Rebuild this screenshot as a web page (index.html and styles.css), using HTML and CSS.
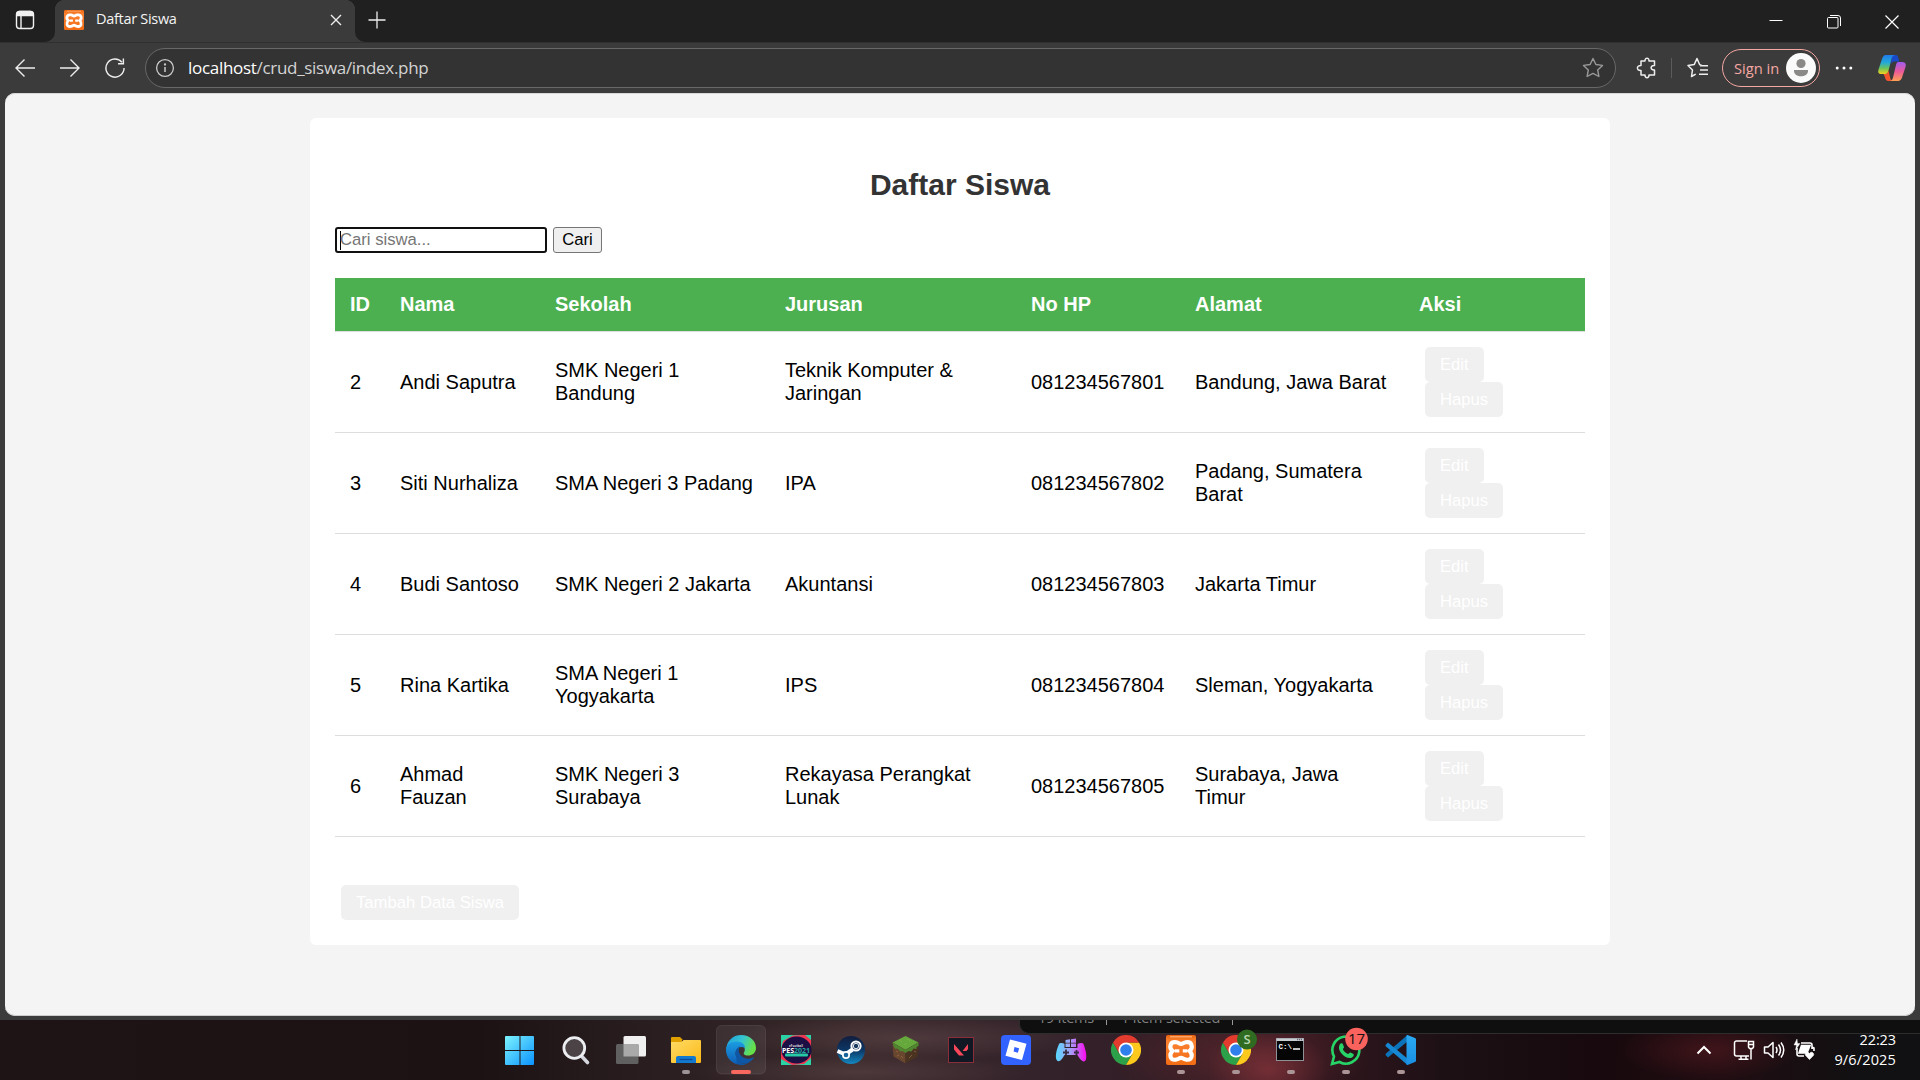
FILE: index.html
```html
<!DOCTYPE html>
<html lang="id">
<head>
<meta charset="utf-8">
<title>Daftar Siswa</title>
<link rel="stylesheet" href="styles.css">
</head>
<body>
<svg class="defs" aria-hidden="true">
  <defs>
    <linearGradient id="win" x1="0" y1="0" x2="1" y2="1"><stop offset="0" stop-color="#7df3ff"/><stop offset="1" stop-color="#0a93ff"/></linearGradient>
    <linearGradient id="folder" x1="0" y1="0" x2="1" y2="1"><stop offset="0" stop-color="#ffdb66"/><stop offset="1" stop-color="#fbb917"/></linearGradient>
    <linearGradient id="orange" x1="0" y1="0" x2="0" y2="1"><stop offset="0" stop-color="#e8640c"/><stop offset=".2" stop-color="#fb8232"/><stop offset="1" stop-color="#f26c14"/></linearGradient>
    <linearGradient id="edgeTop" x1="0" y1="0" x2="1" y2=".35"><stop offset="0" stop-color="#1e9fe0"/><stop offset=".55" stop-color="#35c4cf"/><stop offset="1" stop-color="#66e04a"/></linearGradient>
    <linearGradient id="edgeLow" x1="0" y1="0" x2="0" y2="1"><stop offset="0" stop-color="#1b9de2"/><stop offset="1" stop-color="#0d5cb5"/></linearGradient>
    <linearGradient id="steam" x1="0" y1="0" x2="0" y2="1"><stop offset="0" stop-color="#111d3e"/><stop offset=".5" stop-color="#0c3765"/><stop offset="1" stop-color="#1488c0"/></linearGradient>
    <linearGradient id="pad" gradientUnits="userSpaceOnUse" x1="12" y1="0" x2="42" y2="0"><stop offset="0" stop-color="#58d7ff"/><stop offset=".5" stop-color="#a79cf7"/><stop offset="1" stop-color="#f80df0"/></linearGradient>
    <linearGradient id="code" x1="0" y1="0" x2="0" y2="1"><stop offset="0" stop-color="#2aaaf2"/><stop offset="1" stop-color="#1a8fe3"/></linearGradient>
    <linearGradient id="copL" x1="0" y1="0" x2="0" y2="1"><stop offset="0" stop-color="#1f7bea"/><stop offset=".4" stop-color="#24a9d8"/><stop offset=".7" stop-color="#6cc55a"/><stop offset="1" stop-color="#f5cf1e"/></linearGradient>
    <linearGradient id="copR" x1="0" y1="0" x2="0" y2="1"><stop offset="0" stop-color="#9f5cf0"/><stop offset=".5" stop-color="#ec5a9a"/><stop offset="1" stop-color="#ffa052"/></linearGradient>
    <symbol id="xampp" viewBox="0 0 30 30">
      <rect width="30" height="30" rx="2" fill="url(#orange)"/>
      <path d="M4 1.800h22" stroke="#ffb27a" stroke-width="1.200"/>
      <g transform="translate(-2.200 -1.300) scale(1.150)">
        <path d="M11 7.500c-6-1-6.500 5-3.500 7.500c-3 3-2.500 8.500 3.500 7.500c2-.3 2.500-1.500 4-1.500s2 1.200 4 1.500c6 1 6.500-4.500 3.500-7.500c3-2.500 2.500-8.500-3.500-7.500c-2 .3-2.500 1.500-4 1.500s-2-1.200-4-1.500z" fill="none" stroke="#fff" stroke-width="3.600"/>
        <path d="M9.500 15h4M16.500 15h4" stroke="#fff" stroke-width="2.800"/>
      </g>
    </symbol>
    <symbol id="chrome" viewBox="0 0 30 30">
      <path d="M2 7.500A15 15 0 0 0 15 30L21.500 18.700L8.500 18.700z" fill="#2da04a"/>
      <path d="M28 7.500A15 15 0 0 1 15 30L21.500 18.700L15 7.500z" fill="#fdc91d"/>
      <path d="M2 7.500A15 15 0 0 1 28 7.500H15L8.500 18.700z" fill="#e33b2e"/>
      <circle cx="15" cy="15" r="7.500" fill="#fff"/><circle cx="15" cy="15" r="5.800" fill="#2f80ed"/>
    </symbol>
  </defs>
</svg>

<header class="tabstrip">
  <div class="workspaces"><svg width="20" height="20" viewBox="0 0 20 20" fill="none" stroke="#f2f2f2" stroke-width="1.400"><rect x="1.500" y="1.500" width="17" height="17" rx="3"/><path d="M2 4.500a3 3 0 0 1 3-3h10a3 3 0 0 1 3 3v1H2z" fill="#f2f2f2"/><path d="M6 6v12.500"/></svg></div>
  <div class="tab">
    <svg width="20" height="20"><use href="#xampp"/></svg>
    <span class="tab-title">Daftar Siswa</span>
    <svg width="12" height="12" viewBox="0 0 12 12" stroke="#eee" stroke-width="1.400"><path d="M1 1l10 10M11 1L1 11"/></svg>
  </div>
  <svg class="plus" width="18" height="18" viewBox="0 0 18 18" stroke="#eee" stroke-width="1.300"><path d="M9 .5v17M.5 9h17"/></svg>
  <div class="winctl">
    <svg width="14" height="14" viewBox="0 0 14 14" fill="none" stroke="#fff"><path d="M.5 5.500h13"/></svg>
    <svg width="14" height="14" viewBox="0 0 14 14" fill="none" stroke="#fff"><rect x=".5" y="2.500" width="10.500" height="10.500" rx="1"/><path d="M3 .5h8a2.500 2.500 0 0 1 2.500 2.500v8"/></svg>
    <svg width="14" height="14" viewBox="0 0 14 14" fill="none" stroke="#fff" stroke-width="1.200"><path d="M.5.500l13 13M13.500.500l-13 13"/></svg>
  </div>
</header>

<nav class="toolbar">
  <div class="navbtns">
    <svg width="20" height="20" viewBox="0 0 20 20" fill="none" stroke="#eee" stroke-width="1.400"><path d="M20 10H1M9.500 1.500L1 10l8.500 8.500"/></svg>
    <svg width="20" height="20" viewBox="0 0 20 20" fill="none" stroke="#eee" stroke-width="1.400"><path d="M0 10h19M10.500 1.500L19 10l-8.500 8.500"/></svg>
    <svg width="20" height="20" viewBox="0.500 0.500 21 21" fill="none" stroke="#eee" stroke-width="1.500"><path d="M20.500 11A9.500 9.500 0 1 1 18.300 5M19.800 1v5.500h-5.600"/></svg>
  </div>
  <div class="address">
    <svg width="20" height="20" viewBox="0 0 20 20" fill="none" stroke="#ccc" stroke-width="1.300"><circle cx="10" cy="10" r="8.400"/><path d="M10 9v5" stroke-width="1.500"/><circle cx="10" cy="6.500" r=".5"/></svg>
    <span class="url">localhost<span class="path">/crud_siswa/index.php</span></span>
    <svg width="22" height="22" viewBox="0 0 22 22" fill="none" stroke="#999" stroke-width="1.400" stroke-linejoin="round"><path d="M11 1.500l2.900 6 6.600.9-4.800 4.600 1.200 6.500-5.900-3.100-5.900 3.100 1.200-6.500L1.500 8.400l6.600-.9z"/></svg>
  </div>
  <svg class="ext" width="22" height="22" viewBox="0 0 22 22" fill="none" stroke="#eee" stroke-width="1.500" stroke-linejoin="round"><path d="M5 4h4c-.3-3.800 4.300-3.800 4 0h5.500v4.500c-4.500-.5-4.500 5 0 4.500v5H13c.2 3.500-4.200 3.500-4 0H5v-4.500c-4.800.5-4.800-5.300 0-5z"/></svg>
  <div class="sep"></div>
  <svg class="favs" width="22" height="22" viewBox="0 0 22 22" fill="none" stroke="#eee" stroke-width="1.500" stroke-linejoin="round"><path d="M14.500 8l-1.800-.3L10 1.500 7.200 7.600l-6.200.9 4.500 4.500-1 6.500 4.200-2.300M13 8.700h8M13 13h8M12 17.300h9"/></svg>
  <div class="signin"><span>Sign in</span><svg width="30" height="30" viewBox="0 0 30 30"><circle cx="15" cy="15" r="15" fill="#fafafa"/><circle cx="15" cy="10.500" r="4.600" fill="#8b8987"/><path d="M8 17h14v1c0 7-14 7-14 0z" fill="#8b8987"/></svg></div>
  <svg class="dots" width="18" height="6" viewBox="0 0 18 6" fill="#fff"><circle cx="2.200" cy="3" r="1.500"/><circle cx="9" cy="3" r="1.500"/><circle cx="15.800" cy="3" r="1.500"/></svg>
  <svg class="copilot" width="28" height="26" viewBox="0 0 28 26"><path d="M14 0h3.500c2 0 2.500 1.500 3 3.500l.8 3H16c-2 0-2.500 1.500-3 3z" fill="#1749c9"/><path d="M15 0H8C5.500 0 4.500 2 3.500 5.500L.5 14.500C-.5 18 1 19 3.500 19h4c2 0 2.500-1.500 3-3.500L13.500 4c.5-2.500 1.500-3.500 3.500-4z" fill="url(#copL)"/><path d="M5.500 19h2c2 0 2.500-1.500 3-3.500L12 22c.5 2.500 1 3.500 3 4H11c-3 0-3.500-1.500-4.500-5z" fill="#f2552c"/><path d="M20.500 7H24c3 0 4.500 1.500 3.500 5l-3 9c-1 3.500-2 5-5 5H12c2-.5 2.500-1.500 3-3.500L18 10c.5-2 1-3 2.500-3z" fill="url(#copR)"/></svg>
</nav>

<div class="viewport-frame">
  <div class="viewport">
    <main class="card">
      <h2>Daftar Siswa</h2>
      <form class="search"><div class="field"><i class="caret"></i><span>Cari siswa...</span></div><button class="go" type="button">Cari</button></form>
      <table>
        <colgroup><col class="c-id"><col class="c-nama"><col class="c-sekolah"><col class="c-jurusan"><col class="c-hp"><col class="c-alamat"><col class="c-aksi"></colgroup>
        <thead><tr><th>ID</th><th>Nama</th><th>Sekolah</th><th>Jurusan</th><th>No HP</th><th>Alamat</th><th>Aksi</th></tr></thead>
        <tbody>
          <tr><td>2</td><td>Andi Saputra</td><td>SMK Negeri 1<br>Bandung</td><td>Teknik Komputer &amp;<br>Jaringan</td><td>081234567801</td><td>Bandung, Jawa Barat</td><td class="actions"><a class="btn">Edit</a><a class="btn">Hapus</a></td></tr>
          <tr><td>3</td><td>Siti Nurhaliza</td><td>SMA Negeri 3 Padang</td><td>IPA</td><td>081234567802</td><td>Padang, Sumatera<br>Barat</td><td class="actions"><a class="btn">Edit</a><a class="btn">Hapus</a></td></tr>
          <tr><td>4</td><td>Budi Santoso</td><td>SMK Negeri 2 Jakarta</td><td>Akuntansi</td><td>081234567803</td><td>Jakarta Timur</td><td class="actions"><a class="btn">Edit</a><a class="btn">Hapus</a></td></tr>
          <tr><td>5</td><td>Rina Kartika</td><td>SMA Negeri 1<br>Yogyakarta</td><td>IPS</td><td>081234567804</td><td>Sleman, Yogyakarta</td><td class="actions"><a class="btn">Edit</a><a class="btn">Hapus</a></td></tr>
          <tr><td>6</td><td>Ahmad<br>Fauzan</td><td>SMK Negeri 3<br>Surabaya</td><td>Rekayasa Perangkat<br>Lunak</td><td>081234567805</td><td>Surabaya, Jawa<br>Timur</td><td class="actions"><a class="btn">Edit</a><a class="btn">Hapus</a></td></tr>
        </tbody>
      </table>
      <div class="add"><a class="btn">Tambah Data Siswa</a></div>
    </main>
  </div>
</div>

<footer class="taskbar">
  <div class="peek"><div class="peek-text"><span>19 items</span><i></i><span>1 item selected</span><i></i></div></div>
  <div class="apps">
    <svg viewBox="0 0 55 60"><path d="M11 17a1 1 0 0 1 1-1h13.500v14H11zM26.500 16H39a1 1 0 0 1 1 1v13H26.500zM11 31h14.500v14H12a1 1 0 0 1-1-1zM26.500 31H40v13a1 1 0 0 1-1 1H26.500z" fill="url(#win)"/></svg>
    <svg viewBox="0 0 55 60"><path d="M32 35.500l6.500 7" stroke="#d4d8de" stroke-width="3.600" stroke-linecap="round"/><circle cx="25.300" cy="28" r="10.400" fill="#4b4346" stroke="#eceef1" stroke-width="2.800"/></svg>
    <svg viewBox="0 0 55 60"><rect x="19.500" y="16" width="22.500" height="20.500" rx="1.500" fill="#f0f0f0"/><rect x="12" y="24" width="22.500" height="20" rx="1.500" fill="#606060"/><path d="M19.500 24h15v12.500h-15z" fill="#a9a9a9"/></svg>
    <svg viewBox="0 0 55 60"><path d="M12 18a1 1 0 0 1 1-1h8l3 3h-1v5H12z" fill="#dfa000"/><path d="M12 22h10.500l2-2H41a1 1 0 0 1 1 1v21a1 1 0 0 1-1 1H13a1 1 0 0 1-1-1z" fill="url(#folder)"/><path d="M17 43v-5a2 2 0 0 1 2-2h16a2 2 0 0 1 2 2v5z" fill="#1379cf"/><path d="M20.500 39.500h13" stroke="#0b4b96" stroke-width="1.200"/><rect x="23" y="50" width="8" height="4" rx="2" fill="#9c9496"/></svg>
    <svg viewBox="0 0 55 60"><rect x="2.500" y="5.500" width="49" height="48.500" rx="5" fill="#fff" fill-opacity=".07" stroke="#fff" stroke-opacity=".09"/><path d="M12.500 27C14 19.500 20 15 27 15c9 0 15 6 15 13 0 5-4 7.500-8 7.500-3.500 0-5-1.500-4-3 2-3 .5-7.500-5-8-5-.5-9.500 1.500-12.500 5z" fill="url(#edgeTop)"/><path d="M12 30c0-5 4.500-8.500 10.500-8.500 5 0 8.500 2.500 8.500 6.500-6-3.500-11 2-9 8 1.500 4.500 5 7.500 9.500 8.500C20 46.500 12 39 12 30z" fill="url(#edgeLow)"/><path d="M26 26c-5 3-5.500 8-3 12.500 3 5 8 6.500 11 4.500 3.500-2 5.500-4 6-6-4 2.500-9 2-12-.5-3.500-3-4-6.500-2-10.500z" fill="#0e57a6"/><path d="M22.500 37.500c2 4 5.500 6.500 9 7-3 .8-7 .3-9-1z" fill="#0e57a6"/><rect x="17" y="50" width="20" height="4" rx="2" fill="#f8685f"/></svg>
    <svg viewBox="0 0 55 60"><path d="M12 15h30v30H12z" fill="#2ad3a6"/><path d="M12 30l2-9 10-5.500 12-.5 6 5v18l-7 6-12 1-11-6z" fill="#ef3550"/><ellipse cx="27.500" cy="30" rx="15" ry="13.500" fill="#1b0f43"/><text x="27" y="27" class="pes-small">eFootball</text><text x="27" y="32.500" class="pes">PES<tspan fill="#23aaa0">2021</tspan></text><rect x="16" y="33.500" width="23" height="3" rx="1" fill="#25c9a5"/></svg>
    <svg viewBox="0 0 55 60"><circle cx="27" cy="30" r="14" fill="url(#steam)"/><path d="M13.500 31l8 3.500 7-5" fill="none" stroke="#fff" stroke-width="4"/><circle cx="22" cy="35" r="4" fill="#fff"/><circle cx="22" cy="35" r="2.300" fill="#19659b"/><circle cx="32" cy="26" r="4.600" fill="#19395f" stroke="#fff" stroke-width="2"/><circle cx="32" cy="26" r="2.700" fill="none" stroke="#fff" stroke-width=".9"/></svg>
    <svg viewBox="0 0 55 60"><path d="M26.500 16l13 6.500-13 7.500-13-7.500z" fill="#65a83c"/><path d="M13.500 22.500l13 7.500v13.500l-12-7z" fill="#68472e"/><path d="M39.500 22.500l-13 7.500v13.500l12-7z" fill="#4b3322"/><path d="M13.500 22.500l13 7.500 13-7.500v3.500l-2 1v2l-3-.5-2 3-3-.5-3 2-3-2-2 .5-3-3-2 .5-2-3z" fill="#4f8730"/><path d="M20 20l3 1.500M28 19l4 2M25 25l3-1.500" stroke="#86b552" stroke-width="1" opacity=".6"/><path d="M17 31l2 1M22 36l2 2M30 38l3-3M35 31l2 1M18 36l2-1" stroke="#a3764d" stroke-width="1" opacity=".6"/></svg>
    <svg viewBox="0 0 55 60"><rect x="14.500" y="17.500" width="25" height="25" fill="#101923" stroke="#8b2e39"/><path d="M20 24v5.500l5 6h5zM34 24l-5.500 7h4l1.500-2z" fill="#f5465a"/></svg>
    <svg viewBox="0 0 55 60"><rect x="12" y="15" width="30" height="30" rx="4" fill="#3262ff"/><path d="M21 19.500l16.500 4.300L33 40l-16.500-4.300zM25.500 27l-.9 4.600 4.300 1.100 1.200-4.500z" fill="#fff" fill-rule="evenodd"/></svg>
    <svg viewBox="0 0 55 60" fill="url(#pad)"><path d="M21.500 20l4.500-.7v3.400h-4.500zM27 19.200l5-.8v4.300h-5zM21.500 23.600H26V27h-4.500zM27 23.600h5V27h-5z"/><path d="M15 24c1-1.500 4-1 5.500 0v4h13v-4c2-1 5-1.500 6 0 2 5 4 13 2 16.500-2.500 3-6-2-8-5.500h-13c-2 3.500-5 8-7.500 5.500-2.500-3-.5-11 2-16.500z"/><path d="M22 29.500v6M19 32.500h6M32.500 30v5M30 32.500h5" stroke="#392b43" stroke-width="1.800"/></svg>
    <svg viewBox="0 0 55 60"><use href="#chrome" x="12" y="15" width="30" height="30"/></svg>
    <svg viewBox="0 0 55 60"><use href="#xampp" x="12" y="15" width="30" height="30"/><rect x="23" y="50" width="8" height="4" rx="2" fill="#ab9496"/></svg>
    <svg viewBox="0 0 55 60"><use href="#chrome" x="12" y="15" width="30" height="30"/><circle cx="38" cy="19.500" r="10" fill="#2f6b20"/><text x="38" y="24" class="profile">S</text><rect x="23" y="50" width="8" height="4" rx="2" fill="#ab9496"/></svg>
    <svg viewBox="0 0 55 60"><rect x="12.500" y="18.500" width="27" height="22" fill="#050505" stroke="#8e9297"/><path d="M12.500 18.500h27v2.500h-27z" fill="#c8cdd2"/><path d="M33 19.500h5" stroke="#667" stroke-width="1.500" stroke-dasharray="1.200 .8"/><text x="14.500" y="29" class="prompt">C:\</text><path d="M29 29h7" stroke="#fff" stroke-width="1.500"/><rect x="23" y="50" width="8" height="4" rx="2" fill="#ab9496"/></svg>
    <svg viewBox="0 0 55 60"><path d="M13 44l2-7.500A13.500 13.500 0 1 1 20.500 42z" fill="#251217" fill-opacity=".6" stroke="#27d366" stroke-width="2.600"/><path d="M20.500 25c1-2.500 3-2 3.500-.5l1 2.500c.3 1-1.500 1.800-1 2.500 1 2 3 3.800 5 4.500.8.200 1.500-2 2.500-1.500l2.500 1.200c1.500.8.500 3-1 3.700-3 1.500-7-.2-9.500-2.900-2.500-2.500-4.500-6-3-9.500z" fill="#27d366"/><circle cx="37.500" cy="19" r="11.300" fill="#fa625d"/><text x="37.500" y="24.300" class="count">17</text><rect x="23" y="50" width="8" height="4" rx="2" fill="#ab9496"/></svg>
    <svg viewBox="0 0 55 60"><path d="M34 21L14 37.500l-2-2c-.7-.7-.5-1.500 0-2L33.500 15z" fill="#0b73b9"/><path d="M34 39L14 22.500l-2 2c-.7.700-.5 1.500 0 2L33.500 45z" fill="#1687d2"/><path d="M33.500 15L41 18c.7.300 1 .8 1 1.500v21c0 .7-.3 1.200-1 1.500L33.500 45c-.5.200-1 0-1-.7V15.700c0-.6.400-.9 1-.7z" fill="url(#code)"/><rect x="23" y="50" width="8" height="4" rx="2" fill="#ab9496"/></svg>
  </div>
  <div class="tray">
    <svg width="16" height="10" viewBox="0 0 16 10" fill="none" stroke="#fff" stroke-width="2"><path d="M1.500 8.500L8 2l6.500 6.500"/></svg>
    <svg class="net" width="22" height="22" viewBox="0 0 22 22" fill="none" stroke="#fff" stroke-width="1.500"><path d="M14 2H3.500a2 2 0 0 0-2 2v11a2 2 0 0 0 2 2H16M8 17v3M13 17v3M5.500 20.300h10M15.500 2.500h5v5.500l-1 1.500h-3l-1-1.500zM15.500 5.500h5M18 9.500v11"/></svg>
    <svg width="22" height="20" viewBox="0 0 22 20" fill="none" stroke="#fff" stroke-width="1.500" stroke-linejoin="round"><path d="M1.500 7H5l5-4.500v15L5 13H1.500zM13 7q2 3 0 6M15.500 4.500q4 5.500 0 11M18 2.500q5.500 7.500 0 15"/></svg>
    <svg width="22" height="22" viewBox="0 0 22 22" fill="none" stroke="#fff" stroke-width="1.600"><path d="M8 4h9a2 2 0 0 1 2 2v4M4 9v6a2 2 0 0 0 2 2h5M19 8l2 1v3"/><path d="M8.500 6.500h8.500l-3 7.500H6z" fill="#fff"/><path d="M4 0L1 6h2.500L2.500 11 7 4.500H4.500z" fill="#fff" stroke-width=".4"/><path d="M16.500 20.500l-4-4.200c-1-2 2-4.500 4-1.800 2-2.700 5-.2 4 1.800z" fill="#fff" stroke-width=".7"/></svg>
    <div class="clock"><span class="time">22:23</span><span class="date">9/6/2025</span></div>
  </div>
</footer>
</body>
</html>
```
FILE: styles.css
```css
* { box-sizing: border-box; }
body { margin: 0; width: 1920px; height: 1080px; overflow: hidden; display: flex; flex-direction: column; background: #3b3b3b; font-family: "Open Sans", sans-serif; }
svg { display: block; flex: none; }
.defs { position: absolute; width: 0; height: 0; }

/* browser chrome */
.tabstrip { height: 42px; flex: none; display: flex; align-items: center; background: #3b3b3b; }
.workspaces { width: 55px; height: 42px; padding: 10px 0 0 15px; background: #202020; border-radius: 0 0 10px 0; }
.tab { width: 300px; height: 42px; display: flex; align-items: center; padding: 0 13px 2px 9px; background: radial-gradient(circle at 10px 10px, #3b3b3b 10px, #202020 10.500px) 0 0 / 10px 10px no-repeat, radial-gradient(circle at 0 10px, #3b3b3b 10px, #202020 10.500px) 100% 0 / 10px 10px no-repeat, #3b3b3b; }
.tab-title { margin-left: 12px; padding-bottom: 2px; flex: 1; color: #f4f4f4; font-size: 14.500px; line-height: 20px; letter-spacing: -.3px; }
.plus { box-sizing: content-box; padding: 11px 0 13px 13px; background: #202020; border-radius: 0 0 0 10px; }
.winctl { flex: 1; height: 42px; display: flex; justify-content: flex-end; gap: 44px; padding: 15px 21px 0 0; background: #202020; }
.toolbar { height: 51px; flex: none; display: flex; align-items: center; padding-left: 15px; border-top: 1px solid #303030; }
.navbtns { width: 130px; display: flex; align-items: center; gap: 25px; }
.address { width: 1471px; height: 40px; display: flex; align-items: center; padding: 0 11px 0 9px; border: 1px solid #686868; border-radius: 20px; background: #333; }
.url { flex: 1; margin-left: 13px; color: #fff; font-size: 17px; letter-spacing: -.3px; line-height: 24px; }
.path { color: #d4d4d4; }
.ext { margin-left: 20px; }
.sep { width: 1px; height: 20px; margin: 0 15px 0 13px; background: #5b5b5b; }
.signin { width: 98px; height: 38px; margin-left: 13px; display: flex; align-items: center; justify-content: space-between; padding: 0 3px 0 11px; border: 1px solid #f4a7a3; border-radius: 19px; color: #f4a7a3; font-size: 14.700px; line-height: 20px; }
.signin span { padding-bottom: 1px; }
.dots { margin-left: 15px; }
.copilot { margin-left: 25px; }
.viewport-frame { height: 927px; flex: none; padding: 0 5px 4px; }
.viewport { height: 923px; padding-top: 25px; background: #f4f4f4; border-radius: 10px; box-shadow: inset 0 1px 0 #d8d8d8, inset 0 -1px 0 #ccc; }

/* page */
.card { width: 1300px; height: 827px; margin: 0 auto; padding: 25px; background: #fff; border-radius: 6px; font-family: "Liberation Sans", Arial, sans-serif; font-size: 20px; color: #000; }
h2 { margin: 25px 0; font-size: 30px; line-height: 34px; text-align: center; color: #333; }
.search { display: flex; gap: 6px; height: 26px; margin: 0 0 25px; font-size: 16.670px; }
.field { width: 212px; display: flex; align-items: center; padding: 0 3px; border: 2px solid #101010; border-radius: 3px; color: #757575; line-height: 20px; }
.field span { margin-left: -1px; }
.caret { width: 1px; height: 19px; background: #000; }
.go { width: 49px; height: 26px; padding: 0; border: 1px solid #767676; border-radius: 3px; background: #efefef; color: #000; font: 16.670px/20px "Liberation Sans", Arial, sans-serif; }
table { width: 1250px; table-layout: fixed; border-collapse: separate; border-spacing: 0; }
.c-id { width: 50px; } .c-nama { width: 155px; } .c-sekolah { width: 230px; } .c-jurusan { width: 246px; } .c-hp { width: 164px; } .c-alamat { width: 224px; } .c-aksi { width: 181px; }
th, td { padding: 0 15px; text-align: left; vertical-align: middle; line-height: 23px; border-bottom: 1px solid #ddd; white-space: nowrap; }
th { height: 54px; background: #4caf50; background-clip: padding-box; color: #fff; }
td { height: 101px; }
.btn { display: block; width: max-content; height: 35px; padding: 0 15px; margin-left: 6px; border-radius: 5px; background: #f0f0f0; color: #fff; font-size: 16.670px; line-height: 35px; }
.add { padding-top: 48px; }

/* taskbar */
.taskbar { position: relative; height: 60px; flex: none; display: flex; justify-content: space-between; padding: 0 24px 0 494px;
  background:
    radial-gradient(ellipse 60px 40px at 1268px 50px, rgba(145,55,62,.6), transparent),
    radial-gradient(ellipse 130px 50px at 1240px 35px, rgba(110,45,50,.5), transparent),
    radial-gradient(ellipse 90px 30px at 1710px 30px, rgba(95,28,34,.5), transparent),
    radial-gradient(ellipse 180px 22px at 910px 18px, rgba(105,80,82,.45), transparent),
    radial-gradient(ellipse 170px 18px at 860px 52px, rgba(105,80,82,.4), transparent),
    linear-gradient(90deg, #1e1415 0, #1c1214 480px, #2a1e20 660px, #3a292c 860px, #33222a 1050px, #341820 1300px, #1c1014 1450px, #17090d 1600px, #200d12 1720px, #111012 1860px); }
.peek { position: absolute; left: 1019px; top: 0; right: 0; height: 14px; overflow: hidden; background: #0f0f0f; border: solid #2d2d2d; border-width: 0 0 1px 1px; border-radius: 0 0 0 10px; }
.peek-text { display: flex; margin-top: -12px; padding-left: 18px; font-size: 14.500px; line-height: 20px; letter-spacing: -.2px; color: #808080; white-space: nowrap; }
.peek-text i { width: 1px; height: 17px; margin: 0 14px 0 12px; background: #999; }
.apps { position: relative; display: flex; }
.apps svg { width: 55px; height: 60px; }
.pes-small { font: bold 3px "Open Sans", sans-serif; fill: #ddd; text-anchor: middle; }
.pes { font: bold 7px "Open Sans", sans-serif; fill: #fff; text-anchor: middle; }
.profile { font: 600 13px "Open Sans", sans-serif; fill: #b9d5b0; text-anchor: middle; }
.prompt { font: bold 7.500px "Liberation Mono", monospace; fill: #fff; }
.count { font: 15px "Open Sans", sans-serif; fill: #111; text-anchor: middle; }
.tray { position: relative; display: flex; align-items: center; gap: 8px; }
.net { margin-left: 13px; }
.clock { width: 73px; display: flex; flex-direction: column; align-items: flex-end; color: #fff; font-size: 14.500px; line-height: 20px; padding-bottom: 1px; letter-spacing: -.1px; }
.date { letter-spacing: .15px; }
```
